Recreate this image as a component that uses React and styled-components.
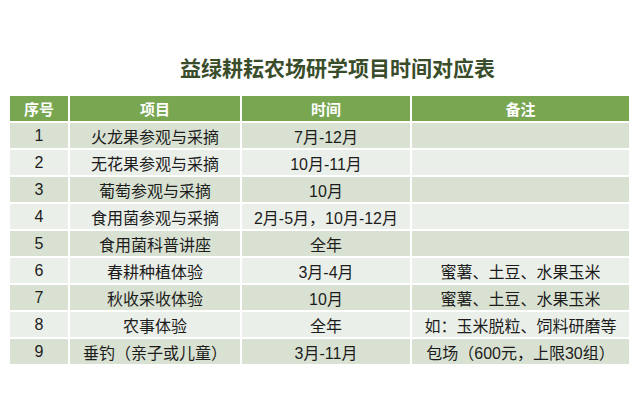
import React from "react";
import styled, { createGlobalStyle } from "styled-components";

const GlobalStyle = createGlobalStyle`
  html, body {
    margin: 0;
    padding: 0;
    background: #ffffff;
  }
  body {
    font-family: "Liberation Sans", "Noto Sans CJK SC", sans-serif;
  }
`;

const Page = styled.div`
  width: 640px;
  height: 402px;
  box-sizing: border-box;
  padding: 54px 11px 0 10px;
  display: flex;
  flex-direction: column;
  align-items: stretch;
`;

const Title = styled.h1`
  margin: 0 0 15px 0;
  padding-left: 36px;
  text-align: center;
  font-family: "Noto Sans CJK SC", sans-serif;
  font-size: 21px;
  line-height: 27px;
  font-weight: 700;
  color: #3a4d2a;
`;

const Grid = styled.div`
  display: grid;
  grid-template-columns: 58px 170px 168px 217px;
  grid-auto-rows: 25px;
  grid-template-rows: 25px;
  gap: 2px;
`;

const HeadCell = styled.div`
  background: #78a651;
  color: #ffffff;
  font-family: "Noto Sans CJK SC", sans-serif;
  font-weight: 700;
  font-size: 15px;
  display: flex;
  align-items: center;
  justify-content: center;
`;

const Cell = styled.div`
  background: ${(p) => (p.$odd ? "#d9e2d2" : "#ebefe9")};
  color: #1c1c1c;
  font-size: 16px;
  display: flex;
  align-items: center;
  justify-content: center;
  white-space: nowrap;
`;

const rows = [
  ["1", "火龙果参观与采摘", "7月-12月", ""],
  ["2", "无花果参观与采摘", "10月-11月", ""],
  ["3", "葡萄参观与采摘", "10月", ""],
  ["4", "食用菌参观与采摘", "2月-5月，10月-12月", ""],
  ["5", "食用菌科普讲座", "全年", ""],
  ["6", "春耕种植体验", "3月-4月", "蜜薯、土豆、水果玉米"],
  ["7", "秋收采收体验", "10月", "蜜薯、土豆、水果玉米"],
  ["8", "农事体验", "全年", "如：玉米脱粒、饲料研磨等"],
  ["9", "垂钓（亲子或儿童）", "3月-11月", "包场（600元，上限30组）"],
];

export default function App() {
  return (
    <>
      <GlobalStyle />
      <Page>
        <Title>益绿耕耘农场研学项目时间对应表</Title>
        <Grid>
          {["序号", "项目", "时间", "备注"].map((h) => (
            <HeadCell key={h}>{h}</HeadCell>
          ))}
          {rows.map((r, i) =>
            r.map((c, j) => (
              <Cell key={i + "-" + j} $odd={i % 2 === 0}>
                {c}
              </Cell>
            ))
          )}
        </Grid>
      </Page>
    </>
  );
}
